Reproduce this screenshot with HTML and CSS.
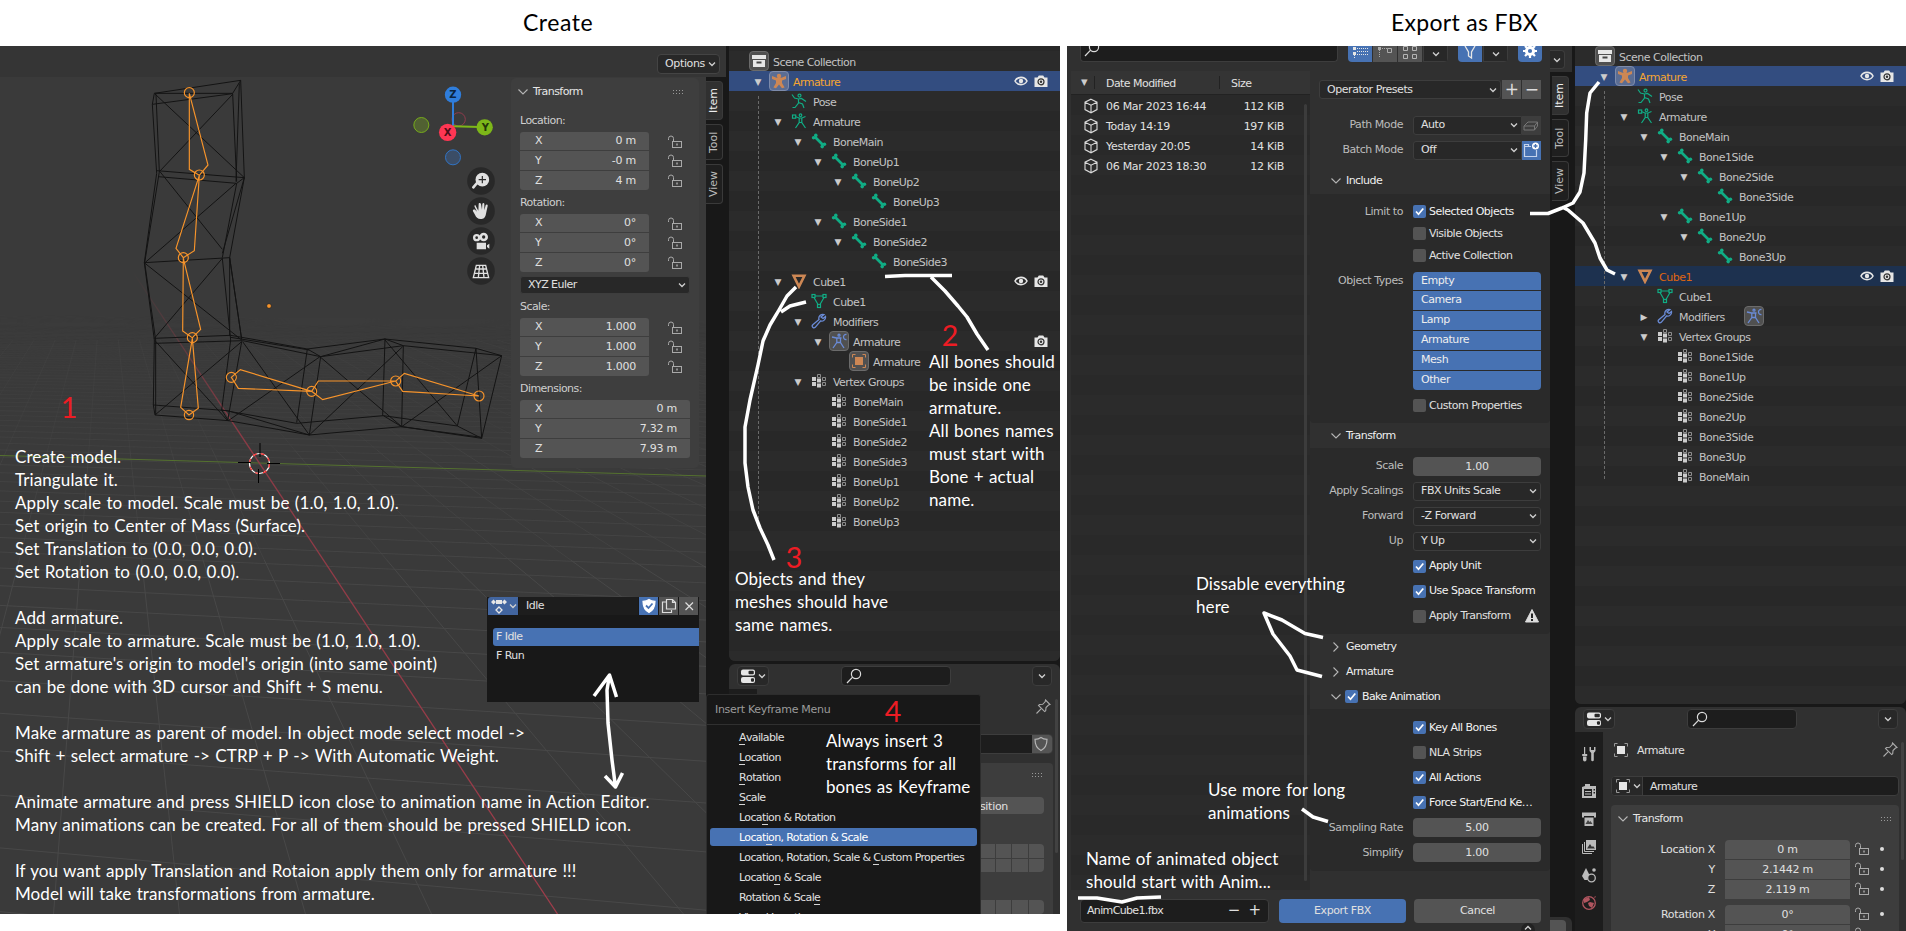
FILE: index.html
```html
<!DOCTYPE html>
<html lang="en">
<head>
<meta charset="utf-8">
<title>Create / Export as FBX</title>
<link rel="stylesheet" href="styles.css">
</head>
<body>
<svg class="defs" aria-hidden="true">
  <symbol id="coll" viewBox="0 0 16 16"><path fill="#e6e6e6" d="M1 2h14v4H1zM2 7h12v7H2z"/><path fill="#444" d="M5.5 8.5h5v2h-5z"/></symbol>
  <symbol id="armobj" viewBox="0 0 16 16"><circle cx="8" cy="3" r="2.200" fill="currentColor"/><path fill="currentColor" d="M1 3l4.500 1.800h5L15 3v3l-4 1.400V10l2.600 4.400-2.600.9L8 11.500l-3 3.800-2.600-.9L5 10V7.400L1 6z"/></symbol>
  <symbol id="pose" viewBox="0 0 16 16"><g fill="none" stroke="currentColor" stroke-width="1.200"><circle cx="8.500" cy="2.600" r="1.500"/><path d="M1 1.500l2.500 3.500 4 1 3-.5L15 8.500M7.500 6v4L4 14.500H1.500M7.500 9.500l4 1.500 1.500 4"/></g></symbol>
  <symbol id="armdata" viewBox="0 0 16 16"><g fill="none" stroke="currentColor" stroke-width="1.200"><rect x="1.500" y="2" width="3.200" height="3.200"/><circle cx="9.500" cy="2.200" r="1.300"/><path d="M5 3.800l3 1.200h3l3.500-1.500M8.200 5v4.500l-3.700 5.500M10.800 5v4.500l3.700 5.500M8.200 9.500h2.600"/></g></symbol>
  <symbol id="bone" viewBox="0 0 16 16"><path d="M4 4l8 8" stroke="currentColor" stroke-width="2.600"/><g fill="currentColor"><circle cx="2.600" cy="4.800" r="1.800"/><circle cx="4.800" cy="2.400" r="1.800"/><circle cx="13.400" cy="11.200" r="1.800"/><circle cx="11.200" cy="13.600" r="1.800"/></g></symbol>
  <symbol id="meshobj" viewBox="0 0 16 16"><path d="M2.600 2.800h10.800L8 13.600z" fill="none" stroke="currentColor" stroke-width="2.600"/></symbol>
  <symbol id="meshdata" viewBox="0 0 16 16"><g fill="none" stroke="currentColor" stroke-width="1.200"><rect x="1" y="1.500" width="3" height="3"/><rect x="12" y="1.500" width="3" height="3"/><rect x="6.500" y="11.500" width="3" height="3"/><path d="M4 3h8M3 4.500l4 7M13 4.500l-4 7"/></g></symbol>
  <symbol id="wrench" viewBox="0 0 16 16"><path fill="none" stroke="currentColor" stroke-width="1.300" d="M13 1.500a4 4 0 0 0-5 5L1.800 11.800a1.700 1.700 0 0 0 2.400 2.500L9.500 8a4 4 0 0 0 5-4.500l-2.500 2-2-1.500z"/></symbol>
  <symbol id="modarm" viewBox="0 0 16 16"><g fill="none" stroke="currentColor" stroke-width="1.300"><path d="M1 4l4.500 1h5M5.800 5v4.500L2 15M9.500 5v4.500L13 15M6 9.500h3.500M15.500 1.500c-4-.5-4 5.500 0 5"/><circle cx="8" cy="2.200" r="1"/></g></symbol>
  <symbol id="objsq" viewBox="0 0 16 16"><path fill="var(--sq,currentColor)" d="M4 4h8v8H4z"/><path fill="none" stroke="currentColor" stroke-width="1" d="M1.500 4.500v-3h3M11.500 1.500h3v3M14.500 11.500v3h-3M4.500 14.500h-3v-3"/></symbol>
  <symbol id="vg" viewBox="0 0 16 16"><g fill="#ccc"><path d="M1 4h4v4H1zM1 9h4v4H1zM6 5.500h4v4H6zM6 10.500h4v4H6z"/></g><g fill="none" stroke="#8c8c8c"><path d="M6.500 1.500h3v3h-3zM11.500 4.500h3v3h-3zM11.500 9.500h3v3h-3z"/></g></symbol>
  <symbol id="eye" viewBox="0 0 16 16"><path fill="none" stroke="#e6e6e6" stroke-width="1.600" d="M2 8c2.500-4.800 9.500-4.800 12 0-2.500 4.800-9.500 4.800-12 0z"/><circle cx="8" cy="8" r="2.200" fill="#e6e6e6"/></symbol>
  <symbol id="cam" viewBox="0 0 16 16"><path fill="#e6e6e6" d="M1.500 4.500h3l1.300-2h4.400l1.300 2h3v9.500h-13z"/><circle cx="8" cy="8.800" r="3" fill="none" stroke="#333" stroke-width="1.200"/><circle cx="8" cy="8.800" r="1.200" fill="#333"/></symbol>
  <symbol id="lock" viewBox="0 0 16 16"><g fill="none" stroke="#a9a9a9"><path d="M1.500 6V4.500a2.500 2.500 0 0 1 5 0V7"/><rect x="5.500" y="7.500" width="9" height="6"/><path d="M10 9.500v2" stroke="#ddd"/></g></symbol>
  <symbol id="chev" viewBox="0 0 10 10"><path d="M2 3.500l3 3 3-3" fill="none" stroke="#d0d0d0" stroke-width="1.300"/></symbol>
  <symbol id="big" viewBox="0 0 12 12"><path d="M1.500 3.500l4.500 4.500 4.500-4.500" fill="none" stroke="#b5b5b5" stroke-width="1.100"/></symbol>
  <symbol id="find" viewBox="0 0 16 16"><g fill="none" stroke="#dcdcdc" stroke-width="1.200"><circle cx="10" cy="6" r="4.600"/><path d="M6.600 9.200L1 15"/></g></symbol>
  <symbol id="pin" viewBox="0 0 16 16"><path fill="none" stroke="#aaa" stroke-width="1.100" d="M10.500 1l4.500 4.500-1.500.5-2.500 2.500-.3 3.300-1 .8L3.500 6.500l1-1 3.200-.2 2.400-2.500zM6 9.800L1.500 14.500"/></symbol>
  <symbol id="shield" viewBox="0 0 16 16"><path fill="var(--f,none)" stroke="var(--s,#b5b5b5)" stroke-width="1.200" d="M8 1.500c2 1.500 4 1.800 6 1.800 0 5-1.500 9-6 11.200C3.500 12.300 2 8.300 2 3.300c2 0 4-.3 6-1.800z"/></symbol>
  <symbol id="cube" viewBox="0 0 16 16"><path fill="none" stroke="#d9d9d9" stroke-width="1.100" d="M8 1.200l6 3v7.400l-6 3.200-6-3.200V4.200zM2 4.200l6 3 6-3M8 7.200v7.600"/></symbol>
  <symbol id="props" viewBox="0 0 16 16"><g fill="#e6e6e6"><rect x="1" y="1.500" width="14" height="6" rx="2"/><rect x="1" y="9" width="14" height="6" rx="2"/></g><rect x="8.500" y="2.700" width="5.300" height="3.600" rx="1" fill="#282828"/><rect x="11" y="10.200" width="3" height="3.600" rx="1" fill="#282828"/></symbol>
  <symbol id="dots" viewBox="0 0 12 6"><g fill="#999"><path d="M0 1h1v1H0zM3 1h1v1H3zM6 1h1v1H6zM9 1h1v1H9zM0 4h1v1H0zM3 4h1v1H3zM6 4h1v1H6zM9 4h1v1H9z"/></g></symbol>
</svg>

<main class="page">
<section class="fig fig-left">
  <h1 class="title">Create</h1>
  <div class="shot shot-left">
    <div class="view">
      <svg class="scene" viewBox="0 0 706 868">
        <g transform="translate(0 -46)">
          <g id="grid" class="grid"></g>
          <path d="M0 455.500L706 476" stroke="#55722f"/>
          <defs><linearGradient id="redfade" x1="0" y1="0" x2="0" y2="1"><stop offset="0" stop-color="#8b3a45" stop-opacity="0"/><stop offset=".25" stop-color="#8b3a45"/><stop offset="1" stop-color="#a03c4a"/></linearGradient></defs>
          <path d="M133 272L557.500 914" stroke="url(#redfade)" stroke-width="1.300"/>
          <g transform="scale(.33333)">
            <g class="wire">
              <path d="M463 280L722 241L733 533L689 773L725 1018M463 280L457 313L470 520L433 788L463 1020L460 1215L465 1245L685 1262M468 283L478 515L434 788L467 1020V1245M463 280H698L722 241M457 313L698 281L710 545M718 250L708 545M470 512L733 533L710 550L475 530M465 282L733 533M698 283L478 515M433 788L689 773V1008M710 550L667 773M733 533L667 760M480 515L667 748M708 550L435 788M667 775L692 1020L665 1230M689 773L725 1018M435 790L725 1020M667 775L463 1015M463 1015L692 1006M463 1030L728 1022M460 1215L683 1232M465 1022L683 1262M725 1025L465 1245M725 1025L683 1262"/>
              <path d="M692 1006L922 1047L1155 1017L1428 1045L1505 1067M728 1022L962 1070L1210 1037L1505 1067M692 1012L928 1050M1155 1017L1210 1037M922 1047L962 1070L1155 1017M922 1047L890 1268M962 1070L928 1305M728 1025L928 1305M960 1070L685 1262M665 1230L890 1270L1150 1247L1372 1278L1445 1315M665 1230L685 1262L928 1305L1205 1280L1445 1315M683 1232L928 1305M1150 1247L1205 1280L1445 1312M1155 1017L1148 1247M1210 1037L1205 1280M962 1072L1205 1280M1208 1040L928 1305M1155 1020L1372 1278M1505 1067L1205 1280M1428 1045L1372 1278M1428 1045L1445 1315L1505 1067"/>
            </g>
            <g class="bones">
              <path d="M568 280V508L598 526L624 495zM598 526L528 745L550 773L583 752zM550 775L548 993L577 1013L602 988zM577 1015L542 1222L567 1245L595 1225zM935 1174L721 1109L694 1132L715 1165zM1187 1143H955L935 1174L968 1199zM1437 1188L1213 1120L1187 1143L1208 1174z"/>
              <circle cx="568" cy="278" r="15"/><circle cx="598" cy="525" r="15"/><circle cx="550" cy="773" r="15"/><circle cx="577" cy="1013" r="15"/><circle cx="567" cy="1245" r="14"/><circle cx="694" cy="1132" r="15"/><circle cx="935" cy="1174" r="15"/><circle cx="1187" cy="1143" r="15"/><circle cx="1437" cy="1188" r="15"/>
            </g>
            <circle cx="807" cy="918" r="7" fill="#f7942b" stroke="#222" stroke-width="2"/>
            <g class="gizmo">
              <circle cx="1376" cy="358" r="20" fill="none" stroke="#8e3b4c" stroke-width="3"/>
              <circle cx="1264" cy="375" r="22.500" fill="#516132" stroke="#76ab1c" stroke-width="3"/>
              <circle cx="1359" cy="472" r="22.500" fill="#3b4d66" stroke="#3173c4" stroke-width="3"/>
              <path d="M1359 378V300" stroke="#2f7ddb" stroke-width="6"/><path d="M1359 379L1440 381" stroke="#7db719" stroke-width="6"/>
              <circle cx="1359" cy="284" r="24.500" fill="#2f7ddb"/><circle cx="1343" cy="397" r="26" fill="#ff3653"/><circle cx="1454" cy="382" r="24.500" fill="#7db719"/>
              <text x="1359" y="295" fill="#0b2440">Z</text><text x="1343" y="408" fill="#4c0e18">X</text><text x="1456" y="392" fill="#253708">Y</text>
            </g>
            <g fill="#282828"><circle cx="1443" cy="543" r="41.500"/><circle cx="1443" cy="633" r="41.500"/><circle cx="1443" cy="723" r="41.500"/><circle cx="1443" cy="813" r="41.500"/></g>
            <g fill="#e0e0e0">
              <circle cx="1447" cy="539" r="20.500"/><path d="M1431 549L1420 562" stroke="#e0e0e0" stroke-width="8" stroke-linecap="round"/><path d="M1436 539h22M1447 528v22" stroke="#282828" stroke-width="3.500"/>
              <path d="M1427 617l8 15 1-20c0-4 6-4 7 0l3 17 1-17c1-4 6-4 6 0l0 19 4-15c2-4 7-2 6 2l-5 23c-2 12-8 16-16 16-9 0-14-6-17-13l-6-10c-2-5 4-7 7-4l5 5-7-14c-2-5 2-8 3-4z"/>
              <circle cx="1430" cy="713" r="11"/><circle cx="1451" cy="711" r="13"/><path d="M1430 728h28v20h-28zM1461 736l7-5v15l-7-5zM1423 727l6 8"/><g fill="#282828"><circle cx="1430" cy="713" r="4"/><circle cx="1451" cy="711" r="5"/></g>
            </g>
            <path d="M1429 796h28l9 37h-46zM1425 807h36M1422 820h42M1439 796l-4 37M1448 796l4 37" fill="none" stroke="#e0e0e0" stroke-width="4"/>
          </g>
          <g fill="none"><circle cx="259.500" cy="463.500" r="10" stroke="#fff" stroke-width="1.200"/><circle cx="259.500" cy="463.500" r="10" stroke="#ff2b2b" stroke-width="1.200" stroke-dasharray="4 4"/><path d="M260 443v14M258.500 469v14M238 462.500h13M267 463.500h13" stroke="#000"/></g>
        </g>
      </svg>
      <div class="vhead"><span class="btn-opt">Options<svg class="ch"><use href="#chev"/></svg></span></div>
      <div class="vbody">
        <div class="npanel">
          <div class="phead"><svg class="big"><use href="#big"/></svg>Transform<svg class="dots"><use href="#dots"/></svg></div>
          <p class="lab">Location:</p>
          <div class="vec"><div class="cells"><div>X<b>0 m</b></div><div>Y<b>-0 m</b></div><div>Z<b>4 m</b></div></div><div class="locks"><svg><use href="#lock"/></svg><svg><use href="#lock"/></svg><svg><use href="#lock"/></svg></div></div>
          <p class="lab">Rotation:</p>
          <div class="vec"><div class="cells"><div>X<b>0°</b></div><div>Y<b>0°</b></div><div>Z<b>0°</b></div></div><div class="locks"><svg><use href="#lock"/></svg><svg><use href="#lock"/></svg><svg><use href="#lock"/></svg></div></div>
          <div class="drop euler">XYZ Euler<svg class="ch"><use href="#chev"/></svg></div>
          <p class="lab">Scale:</p>
          <div class="vec"><div class="cells"><div>X<b>1.000</b></div><div>Y<b>1.000</b></div><div>Z<b>1.000</b></div></div><div class="locks"><svg><use href="#lock"/></svg><svg><use href="#lock"/></svg><svg><use href="#lock"/></svg></div></div>
          <p class="lab">Dimensions:</p>
          <div class="vec"><div class="cells wide"><div>X<b>0 m</b></div><div>Y<b>7.32 m</b></div><div>Z<b>7.93 m</b></div></div></div>
        </div>
        <div class="tabs"><span class="tab on">Item</span><span class="tab">Tool</span><span class="tab">View</span></div>
      </div>
    </div>
    <div class="side">
      <div class="outliner" id="tree-left"></div>
      <div class="editor ed-left">
        <div class="ehead"><span class="ebox etype"><svg class="ic"><use href="#props"/></svg><svg class="ch"><use href="#chev"/></svg></span><span class="search"><svg class="ic"><use href="#find"/></svg></span><span class="ebox eopt"><svg class="ch"><use href="#chev"/></svg></span></div>
        <div class="ebody">
          <div class="nav-col"></div>
          <div class="content">
            <div class="pinrow"><svg class="ic"><use href="#pin"/></svg></div>
            <div class="namef"><span></span><i><svg class="ic"><use href="#shield"/></svg></i></div>
            <div class="panel">
              <svg class="dots"><use href="#dots"/></svg>
              <div class="restpos">Rest Position</div>
              <div class="layers"><i></i><i></i><i></i><i></i><i></i><i></i><i></i><i></i></div>
              <div class="layers"><i></i><i></i><i></i><i></i></div>
            </div>
          </div>
          <div class="sbar"></div>
        </div>
      </div>
    </div>

    <div class="popup">
      <div class="pbar"><span class="p-type"><svg width="16" height="16" viewBox="0 0 16 16"><path fill="#e6e6e6" d="M5 2h6v4H5zM2.500 1.500L5 4 2.500 6.500 0 4zM13.500 1.500L16 4l-2.500 2.500L11 4z"/><path fill="none" stroke="#e6e6e6" stroke-width="1.300" d="M8 9l3 3-3 3-3-3z"/></svg><svg class="ch"><use href="#chev"/></svg></span><span class="p-name">Idle</span><span class="p-b blue"><svg width="16" height="16"><use class="full" href="#shield"/><path d="M5 7.500l2.500 2.500L11.500 5.500" fill="none" stroke="#4772b3" stroke-width="1.800"/></svg></span><span class="p-b"><svg width="16" height="16"><path fill="none" stroke="#ddd" stroke-width="1.200" d="M5.500 1.500h6l3 3v6.500h-9zM11.500 1.500v3h3M5 4H1.500v10.500h9V12"/></svg></span><span class="p-b"><svg width="16" height="16"><path stroke="#ddd" stroke-width="1.200" d="M4.500 4.500l7.500 7.500M12 4.500l-7.500 7.500"/></svg></span></div>
      <div class="p-item sel">F Idle</div><div class="p-item">F Run</div>
    </div>

    <div class="menu">
      <div class="m-head">Insert Keyframe Menu</div>
      <div class="m-it"><u>A</u>vailable</div><div class="m-it"><u>L</u>ocation</div><div class="m-it"><u>R</u>otation</div><div class="m-it"><u>S</u>cale</div>
      <div class="m-it">Loca<u>t</u>ion &amp; Rotation</div><div class="m-it sel">Locat<u>i</u>on, Rotation &amp; Scale</div><div class="m-it">Location, Rotation, Scale &amp; <u>C</u>ustom Properties</div><div class="m-it">Locatio<u>n</u> &amp; Scale</div><div class="m-it">Rotation &amp; Scal<u>e</u></div><div class="m-it">Visual Location</div>
    </div>
  </div>
</section>

<section class="fig fig-right">
  <h1 class="title">Export as FBX</h1>
  <div class="shot shot-right">
    <div class="fbrowser">
      <div class="topbar"><span class="fsearch"><svg class="ic"><use href="#find"/></svg></span>
        <span class="grp g1"><i class="blue"><svg width="16" height="16"><path fill="#e6e6e6" d="M1 1h3v3H1zM1 6h3v3H1z"/><path stroke="#e6e6e6" stroke-dasharray="1 1" d="M5 2.500h11M5 5.500h11M5 8.500h11M2.500 9v4"/></svg></i><i><svg width="16" height="16"><path fill="#aaa" d="M1 1h3v3H1z"/><path fill="none" stroke="#aaa" stroke-dasharray="1 1" d="M5 2.500h5M2.500 4v8"/><path fill="none" stroke="#aaa" d="M10.500 2.500h4v4h-4z"/></svg></i><i><svg width="16" height="16"><path fill="none" stroke="#b5b5b5" d="M1.500.500h4v4h-4zM10.500.500h4v4h-4zM1.500 8.500h4v4h-4zM10.500 8.500h4v4h-4z"/></svg></i><i class="dk"><svg class="ch"><use href="#chev"/></svg></i></span>
        <span class="grp g2"><i class="blue"><svg width="16" height="16"><path fill="none" stroke="#e6e6e6" stroke-width="1.300" d="M3 0l3.500 6v4l3 2V6L13 0"/></svg></i><i class="dk"><svg class="ch"><use href="#chev"/></svg></i></span>
        <span class="grp g3"><i class="blue"><svg width="16" height="16"><circle cx="8" cy="5" r="3.600" fill="none" stroke="#fff" stroke-width="3"/><path d="M8-2v3M8 9v3M1 5h3M12 5h3M3 0l2 2M11 8l2 2M13 0l-2 2M5 8l-2 2" stroke="#fff" stroke-width="2.200"/></svg></i></span>
      </div>
      <div class="fmain">
        <div class="flist">
          <div class="fhead"><span class="tri">▼</span><span class="c1">Date Modified</span><span class="c2">Size</span></div>
          <div class="frows">
            <div class="frow"><svg class="ic"><use href="#cube"/></svg><span>06 Mar 2023 16:44</span><b>112 KiB</b></div>
            <div class="frow"><svg class="ic"><use href="#cube"/></svg><span>Today 14:19</span><b>197 KiB</b></div>
            <div class="frow"><svg class="ic"><use href="#cube"/></svg><span>Yesterday 20:05</span><b>14 KiB</b></div>
            <div class="frow"><svg class="ic"><use href="#cube"/></svg><span>06 Mar 2023 18:30</span><b>12 KiB</b></div>
          </div>
          <div class="fscroll"></div>
        </div>
        <div class="ops">
          <div class="presets"><span class="drop">Operator Presets<svg class="ch"><use href="#chev"/></svg></span><i>+</i><i>−</i></div>
          <div class="orow"><label>Path Mode</label><span class="drop joined">Auto<svg class="ch"><use href="#chev"/></svg></span><i class="dim"><svg width="16" height="16"><path fill="none" stroke="#777" d="M1 9l4-4h9.500l-3 4zM1 9v4h10.500V9M11.500 13l3-4V5"/></svg></i></div>
          <div class="orow"><label>Batch Mode</label><span class="drop joined">Off<svg class="ch"><use href="#chev"/></svg></span><i class="blue"><svg width="16" height="16"><path fill="none" stroke="#c5d3ec" stroke-width="1.200" d="M8 4.500H1.500v10h12V8M1.500 4V2.500h4V4"/><circle cx="12.500" cy="4" r="3.500" fill="#fff"/><path stroke="#4772b3" stroke-width="1.300" d="M10.500 4h4M12.500 2v4"/></svg></i></div>
          <div class="ohead h-inc"><svg class="big"><use href="#big"/></svg>Include</div>
          <div class="obody b-inc">
            <div class="crow"><label>Limit to</label><span class="ck on">Selected Objects</span></div>
            <div class="crow"><label></label><span class="ck">Visible Objects</span></div>
            <div class="crow"><label></label><span class="ck">Active Collection</span></div>
            <div class="types"><label>Object Types</label><div><p>Empty</p><p>Camera</p><p>Lamp</p><p>Armature</p><p>Mesh</p><p>Other</p></div></div>
            <div class="crow last"><label></label><span class="ck">Custom Properties</span></div>
          </div>
          <div class="ohead"><svg class="big"><use href="#big"/></svg>Transform</div>
          <div class="obody b-tr">
            <div class="orow"><label>Scale</label><span class="num">1.00</span></div>
            <div class="orow"><label>Apply Scalings</label><span class="drop">FBX Units Scale<svg class="ch"><use href="#chev"/></svg></span></div>
            <div class="orow"><label>Forward</label><span class="drop">-Z Forward<svg class="ch"><use href="#chev"/></svg></span></div>
            <div class="orow"><label>Up</label><span class="drop">Y Up<svg class="ch"><use href="#chev"/></svg></span></div>
            <div class="orow"><label></label><span class="ck on">Apply Unit</span></div>
            <div class="orow"><label></label><span class="ck on">Use Space Transform</span></div>
            <div class="orow"><label></label><span class="ck">Apply Transform</span><svg class="warn" width="16" height="16"><path fill="#dcdcdc" stroke="#dcdcdc" stroke-linejoin="round" d="M8 1.500l6.500 12.500h-13z"/><path stroke="#222" stroke-width="2" d="M8 5.500v4.500M8 11v2"/></svg></div>
          </div>
          <div class="ohead"><svg class="big shut"><use href="#big"/></svg>Geometry</div>
          <div class="ohead"><svg class="big shut"><use href="#big"/></svg>Armature</div>
          <div class="ohead"><svg class="big"><use href="#big"/></svg><span class="ck on bake">Bake Animation</span></div>
          <div class="obody b-bake">
            <div class="orow"><label></label><span class="ck on">Key All Bones</span></div>
            <div class="orow"><label></label><span class="ck">NLA Strips</span></div>
            <div class="orow"><label></label><span class="ck on">All Actions</span></div>
            <div class="orow"><label></label><span class="ck on">Force Start/End Ke…</span></div>
            <div class="orow"><label>Sampling Rate</label><span class="num">5.00</span></div>
            <div class="orow"><label>Simplify</label><span class="num">1.00</span></div>
          </div>
        </div>
      </div>
      <div class="fbot"><span class="fname">AnimCube1.fbx<i>−</i><i>+</i></span><span class="fbtn blue">Export FBX</span><span class="fbtn">Cancel</span></div>
      <div class="fhandle"><svg class="ch"><use href="#chev"/></svg></div>
    </div>
    <div class="strip"><div class="strip-head"><span><svg class="ch"><use href="#chev"/></svg></span></div><div class="tabs"><span class="tab on">Item</span><span class="tab">Tool</span><span class="tab">View</span></div><div class="strip-foot"><i></i></div></div>
    <div class="side">
      <div class="outliner" id="tree-right"></div>
      <div class="editor ed-right">
        <div class="ehead"><span class="ebox etype"><svg class="ic"><use href="#props"/></svg><svg class="ch"><use href="#chev"/></svg></span><span class="search"><svg class="ic"><use href="#find"/></svg></span><span class="ebox eopt"><svg class="ch"><use href="#chev"/></svg></span></div>
        <div class="ebody">
          <div class="nav-col">
            <svg viewBox="0 0 16 16"><path fill="#bbb" d="M3 1h1.200v7H3zM1.200 8h5v2h-5zM2 10.500h3.500v3.200a1.700 1.700 0 0 1-3.500 0zM9 1l1 0v3h3V1h1.500v4l-1.700 2v7a1.300 1.300 0 0 1-2.600 0V7L8.500 5V1z"/></svg>
            <svg viewBox="0 0 16 16"><path fill="#bbb" d="M4 3V1h5v2h6v12H1V4l3-1z"/><path fill="#222" d="M3 6h8v7H3zM12.500 6h1.500v1.500h-1.500zM12.500 9H14v1.500h-1.500z"/><path stroke="#bbb" d="M4 8.500h6M4 11h6"/></svg>
            <svg viewBox="0 0 16 16"><path fill="#bbb" d="M1 1.500h14v5h-2V5H3v1.500H1zM3.500 6.500h9v8.500h-9z"/><path fill="#444" d="M4.500 13l2.500-4 1.500 2 1-1 2 3z"/></svg>
            <svg viewBox="0 0 16 16"><path fill="#bbb" d="M5 1h10v10H5z"/><path fill="#333" d="M6 9.500L9 5l2 3 1-1 2 2.500z"/><path fill="none" stroke="#bbb" d="M3.500 3v9.500H13M1.500 5v9.500H11"/></svg>
            <svg viewBox="0 0 16 16"><path fill="#bbb" d="M5 1l4 8-2.500 4H3.500L1 9z"/><circle cx="10.500" cy="11" r="3.800" fill="#222" stroke="#bbb" stroke-width="1.300"/><circle cx="13" cy="3" r="1.800" fill="#bbb"/></svg>
            <svg viewBox="0 0 16 16"><circle cx="8" cy="8" r="6.300" fill="none" stroke="#b0555f" stroke-width="1.300"/><path fill="#b0555f" d="M3 4l5-2 1 3-3 2-3 1zM9 7l4 1-2 5-3-2-1-3zM13 2l2-1-1 2z"/></svg>
          </div>
          <div class="content">
            <div class="crumb"><svg class="ic"><use href="#objsq"/></svg><span>Armature</span><svg class="ic pin"><use href="#pin"/></svg></div>
            <div class="namef"><em><svg class="ic"><use href="#objsq"/></svg><svg class="ch"><use href="#chev"/></svg></em><span>Armature</span></div>
            <div class="panel">
              <div class="phead"><svg class="big"><use href="#big"/></svg>Transform<svg class="dots"><use href="#dots"/></svg></div>
              <div class="trow first"><label>Location X</label><span>0 m</span><svg><use href="#lock"/></svg><i></i></div>
              <div class="trow"><label>Y</label><span>2.1442 m</span><svg><use href="#lock"/></svg><i></i></div>
              <div class="trow"><label>Z</label><span>2.119 m</span><svg><use href="#lock"/></svg><i></i></div>
              <div class="trow rot"><label>Rotation X</label><span>0°</span><svg><use href="#lock"/></svg><i></i></div>
              <div class="trow"><label>Y</label><span>0°</span><svg><use href="#lock"/></svg><i></i></div>
            </div>
          </div>
          <div class="sbar"></div>
        </div>
      </div>
    </div>
  </div>
</section>

<div class="note n-main">Create model.
Triangulate it.
Apply scale to model. Scale must be (1.0, 1.0, 1.0).
Set origin to Center of Mass (Surface).
Set Translation to (0.0, 0.0, 0.0).
Set Rotation to (0.0, 0.0, 0.0).

Add armature.
Apply scale to armature. Scale must be (1.0, 1.0, 1.0).
Set armature's origin to model's origin (into same point)
can be done with 3D cursor and Shift + S menu.

Make armature as parent of model. In object mode select model -&gt;
Shift + select armature -&gt; CTRP + P -&gt; With Automatic Weight.

Animate armature and press SHIELD icon close to animation name in Action Editor.
Many animations can be created. For all of them should be pressed SHIELD icon.

If you want apply Translation and Rotaion apply them only for armature !!!
Model will take transformations from armature.</div>
<div class="note n-bones">All bones should
be inside one
armature.
All bones names
must start with
Bone + actual
name.</div>
<div class="note n-names">Objects and they
meshes should have
same names.</div>
<div class="note n-key">Always insert 3
transforms for all
bones as Keyframe</div>
<div class="note n-dis">Dissable everything
here</div>
<div class="note n-rate">Use more for long
animations</div>
<div class="note n-file">Name of animated object
should start with Anim...</div>
<div class="step s1">1</div><div class="step s2">2</div><div class="step s3">3</div><div class="step s4">4</div>
<svg class="ink" viewBox="0 0 1906 931">
  <path d="M885 276.500L905 275.500H952M931 277L945 291L958 306L967 317L977 334L988 350"/>
  <path d="M796 287L787 296L779 310L770 325L763 341L758 365L750 400L745 427V463L748 487L753 510L760 528L768 545L774 560M806 302L790 306L781 312"/>
  <path d="M609.500 675L607 690L608 723L612 760L615.500 787M594 696L609.500 675L616.500 697M605 776L615.500 787L622.500 773"/>
  <path d="M1530 213.500H1548L1562 208L1573 203L1580 192L1584 173L1585.700 140L1586.700 113L1590 93L1599 82M1562 207L1568 210L1583 223L1595 243L1600 258L1607 270L1615 274"/>
  <path d="M1323 637.500L1305 633.500L1282 620L1264 613L1273 634L1290 656L1297 670L1322 676.500M1302 809L1313 817L1328 821.500"/>
  <path d="M1078 898H1097L1122 902L1137 898L1161 897"/>
</svg>
</main>
<script src="main.js"></script>
</body>
</html>
```
FILE: styles.css
```css
* { box-sizing: border-box; }
body { margin: 0; background: #fff; font: 11px/14px "DejaVu Sans", sans-serif; letter-spacing: -.55px; color: #e0e0e0; }
.defs { position: absolute; width: 0; height: 0; }
.page { position: relative; display: flex; gap: 7px; width: 1906px; height: 931px; overflow: hidden; }
p { margin: 0; }
b, i, em { font-weight: normal; font-style: normal; }
svg { flex: none; }
.fig { display: flex; flex-direction: column; }
.fig-left { width: 1060px; }
.fig-right { width: 839px; }
.title { margin: 0; height: 46px; padding-left: 523px; font: 400 23px/44px Lato, sans-serif; letter-spacing: .55px; color: #000; }
.fig-right .title { padding-left: 324px; letter-spacing: .3px; }
.shot { position: relative; display: flex; overflow: hidden; background: #181818; }
.shot-left { height: 868px; gap: 3px; }
.shot-right { height: 885px; }
.ic { width: 16px; height: 16px; }
.ch { width: 10px; height: 10px; }
.big { width: 12px; height: 12px; }
.big.shut { transform: rotate(-90deg); }
.dots { width: 12px; height: 6px; margin-left: auto; }
.blue { background: #4772b3; }

/* 3D viewport */
.view { position: relative; display: flex; flex-direction: column; width: 726px; }
.scene { position: absolute; left: 0; top: 0; width: 706px; height: 868px; background: #3a3a3a; }
.grid { stroke: #484848; fill: none; }
.wire { stroke: #131313; stroke-width: 3; fill: none; }
.bones { stroke: #f7942b; stroke-width: 3.500; fill: none; }
.gizmo text { font: 700 30px "DejaVu Sans", sans-serif; letter-spacing: 0; text-anchor: middle; }
.vhead { position: relative; display: flex; justify-content: flex-end; height: 31px; padding: 8px 6px 0 0; background: #353535; }
.btn-opt { display: flex; justify-content: space-between; align-items: center; width: 63px; height: 20px; padding: 0 2px 0 7px; background: #282828; border: 1px solid #444; border-radius: 4px; letter-spacing: -.35px; }
.vbody { position: relative; display: flex; justify-content: flex-end; flex: 1; }
.npanel { width: 188px; height: 390px; margin: 1px 7px 0 0; padding: 0 9px; background: #3e3e3e; border-radius: 5px; color: #cfcfcf; }
.phead { display: flex; align-items: center; height: 26px; padding: 1px 5px 0 0; gap: 4px; color: #e6e6e6; margin-left: -3px; }
.npanel .lab { height: 14px; margin: 6px 0 4px; }
.npanel .phead + .lab { margin-top: 10px; }
.vec { display: flex; height: 58px; }
.cells { width: 129px; display: grid; grid-template-rows: 18px 19px 19px; gap: 1px; border-radius: 3px; overflow: hidden; }
.cells.wide { width: 170px; }
.cells div { display: flex; justify-content: space-between; align-items: center; padding: 0 13px 0 15px; background: #545454; color: #e0e0e0; }
.cells b { letter-spacing: -.25px; }
.locks { margin-left: 18px; display: grid; grid-template-rows: repeat(3, 19.500px); align-items: center; }
.locks svg { width: 16px; height: 16px; }
.drop { display: flex; align-items: center; justify-content: space-between; padding: 0 2px 0 7px; background: #282828; border: 1px solid #3d3d3d; border-radius: 3px; color: #e0e0e0; }
.drop.joined { border-radius: 3px 0 0 3px; }
.euler { height: 18px; margin-top: 4px; }
.tabs { width: 20px; background: #181818; padding-top: 4px; display: flex; flex-direction: column; gap: 4px; }
.tab { width: 17px; height: 39px; display: flex; align-items: center; justify-content: center; writing-mode: vertical-rl; transform: rotate(180deg); background: #1f1f1f; border: 1px solid #3a3a3a; border-right: 0; border-radius: 4px 0 0 4px; color: #bbb; letter-spacing: 0; }
.tab:nth-child(2) { height: 36px; }
.tab:nth-child(3) { height: 40px; }
.tab.on { background: #303030; color: #eee; }

/* outliner */
.side { width: 331px; display: flex; flex-direction: column; gap: 3px; }
.outliner { position: relative; overflow: hidden; background: #282828; border-radius: 0 0 6px 6px; color: #c3c3c3; }
#tree-left { height: 615px; padding-top: 5px; }
#tree-right { height: 658px; letter-spacing: -.5px; }
.row { display: flex; align-items: center; height: 20px; padding-right: 11px; }
.row:nth-child(odd) { background: #2b2b2b; }
.row .arrow { width: 12px; padding-top: 2px; text-align: center; font-size: 9px; color: #ccc; letter-spacing: 0; }
.row .box { width: 20px; height: 20px; display: flex; align-items: center; justify-content: center; margin: 0 4px 0 5px; border-radius: 4px; }
.row .box.on { background: #505050; border: 1px solid #6b6b6b; }
.row .name { padding-top: 3px; }
.row .toggles { margin-left: auto; display: flex; gap: 4px; }
.row.active { background: #334d80; }
.row.active .name { color: #f5a531; }
.row.active .box.on { background: #5b6d93; border-color: #7d8bab; }
.row.picked { background: #1d314f; }
.row.picked .name { color: #e0660f; }
.row .box.extra { margin-left: 19px; }
.orange { color: #cd8754; }
.green { color: #10ad85; }
.bluei { color: #6a8bd6; }
.trunk { position: absolute; left: 29px; top: 50px; height: 428px; border-left: 1px dashed #6a6a6a; }
#tree-right .trunk { top: 45px; height: 388px; }

/* properties editors */
.editor { flex: 1; display: flex; flex-direction: column; overflow: hidden; background: #303030; border-radius: 6px 6px 0 0; }
.ehead { display: flex; height: 25px; padding: 2px 8px 0; }
.ebox { display: flex; align-items: center; justify-content: center; height: 20px; background: #282828; border: 1px solid #3d3d3d; border-radius: 4px; }
.etype { width: 32px; gap: 1px; }
.eopt { width: 20px; margin-left: auto; }
.search { width: 110px; height: 20px; margin-left: 72px; padding: 1px 4px; background: #1d1d1d; border: 1px solid #3d3d3d; border-radius: 4px; }
.ebody { flex: 1; display: flex; min-height: 0; overflow: hidden; }
.nav-col { width: 28px; background: #1d1d1d; display: flex; flex-direction: column; align-items: center; gap: 12px; padding-top: 14px; }
.ed-left .nav-col { height: 5px; }
.nav-col svg { width: 16px; height: 16px; }
.nav-col svg:first-child { margin-bottom: 9px; }
.content { width: 288px; margin-left: 8px; display: flex; flex-direction: column; }
.sbar { width: 3px; height: 154px; margin: 10px 0 0 2px; border-radius: 2px; background: #424242; }
.ed-right .sbar { height: 118px; }
.pinrow { height: 45px; padding-top: 10px; display: flex; justify-content: flex-end; }
.pinrow svg { margin-right: 2px; }
.namef { display: flex; height: 20px; background: #1d1d1d; border: 1px solid #3d3d3d; border-radius: 4px; overflow: hidden; }
.namef i { width: 20px; background: #545454; padding: 1px; margin-left: auto; }
.namef em { width: 31px; display: flex; align-items: center; padding-left: 3px; gap: 1px; background: #282828; border-right: 1px solid #3d3d3d; }
.namef span { padding: 3px 7px 0; }
.panel { flex: 1; margin-top: 9px; background: #3d3d3d; border-radius: 4px 4px 0 0; overflow: hidden; }
.ed-left .panel { display: flex; flex-direction: column; padding: 9px 9px 0; }
.restpos { height: 19px; margin: 19px 0 30px; padding: 3px 36px 0 0; text-align: right; background: #545454; border-radius: 4px; letter-spacing: -.3px; }
.layers { display: grid; grid-template-columns: repeat(4, 15.500px); grid-auto-rows: 13.500px; gap: 1px; justify-content: end; border-radius: 4px; overflow: hidden; margin-bottom: 28px; flex: none; }
.layers i { background: #545454; }
.crumb { display: flex; align-items: center; height: 16px; margin: 10px 0 18px; padding-left: 2px; gap: 8px; --sq: #e6e6e6; }
.crumb span { padding-top: 2px; }
.crumb .pin { margin: 0 1px 0 auto; }
.crumb svg, .namef svg { color: #999; --sq: #e6e6e6; }
.ed-right .phead { margin: 0; padding: 2px 6px 0; }
.trow { display: flex; align-items: center; height: 20px; }
.trow.first { margin-top: 8px; }
.trow.rot { margin-top: 5px; }
.trow label { width: 104px; padding-top: 1px; text-align: right; letter-spacing: -.3px; }
.trow span { width: 125px; height: 19px; margin-left: 10px; text-align: center; line-height: 19px; background: #545454; letter-spacing: -.25px; }
.trow.first span, .trow.rot span { border-radius: 4px 4px 0 0; }
.trow svg { width: 16px; height: 16px; margin-left: 4px; }
.trow i { width: 4px; height: 4px; margin-left: 10px; border-radius: 50%; background: #ddd; }

/* action list popup */
.popup { position: absolute; left: 487px; top: 551px; width: 212px; height: 105px; background: #181818; }
.pbar { display: flex; gap: 1px; height: 18px; padding-left: 1px; margin-bottom: 13px; }
.p-type { width: 30px; background: #42659f; display: flex; align-items: center; gap: 1px; padding-left: 3px; border-radius: 3px 0 0 0; }
.p-name { width: 119px; background: #1d1d1d; padding: 2px 7px; }
.p-b { width: 19px; padding: 1px 1px 1px 2px; background: #545454; }
.p-b.blue { background: #4772b3; }
.full { --f: #fff; --s: #fff; }
.p-item { height: 18px; margin: 0 0 1px 6px; padding: 2px 3px; border-radius: 3px 0 0 3px; }
.p-item.sel { background: #4772b3; }

/* keyframe menu */
.menu { position: absolute; left: 706px; top: 648px; width: 275px; height: 230px; background: #181818; border: 1px solid #2d2d2d; border-radius: 3px 3px 0 0; letter-spacing: -.62px; }
.m-head { height: 30px; margin-bottom: 3px; padding: 8px 8px 0; color: #9b9b9b; border-bottom: 1px solid #303030; letter-spacing: -.3px; }
.m-it { height: 18px; margin: 0 3px 2px; padding: 3px 0 0 29px; border-radius: 3px; white-space: nowrap; }
.m-it.sel { background: #4772b3; color: #fff; }
.m-it u { position: relative; text-decoration: none; }
.m-it u::after { content: ""; position: absolute; left: 0; bottom: -1px; width: 6px; height: 1px; background: #d5d5d5; }

/* file browser */
.fbrowser { position: relative; width: 483px; background: #303030; display: flex; flex-direction: column; }
.topbar { display: flex; height: 16px; padding-left: 13px; }
.topbar .fsearch { width: 258px; padding-left: 3px; background: #1d1d1d; border: 1px solid #3d3d3d; border-top: 0; border-radius: 0 0 4px 4px; overflow: hidden; }
.fsearch svg { margin-top: -5px; }
.grp { display: flex; gap: 1px; margin-left: 10px; border-radius: 0 0 4px 4px; overflow: hidden; }
.grp i { width: 24px; background: #545454; display: flex; justify-content: center; }
.grp i.blue { background: #4772b3; }
.grp i.dk { width: 25px; background: #282828; border: 1px solid #3d3d3d; border-top: 0; align-items: center; }
.fmain { display: flex; height: 828px; }
.flist { position: relative; width: 239px; margin: 9px 0 0 4px; display: flex; flex-direction: column; }
.fhead { display: flex; align-items: center; height: 24px; background: #343434; border-bottom: 1px solid #222; }
.fhead span { height: 13px; line-height: 15px; }
.fhead .tri { width: 24px; padding-left: 10px; font-size: 8.500px; line-height: 13px; border-right: 1px solid #222; color: #ccc; }
.fhead .c1 { width: 125px; padding-left: 11px; border-right: 1px solid #222; }
.fhead .c2 { padding-left: 11px; }
.frows { flex: 1; padding-top: 1px; background: repeating-linear-gradient(#292929 0 20px, #2b2b2b 20px 40px); }
.frow { display: flex; align-items: center; height: 20px; padding: 0 26px 0 12px; gap: 7px; letter-spacing: -.28px; }
.frow span, .frow b { padding-top: 2px; }
.frow b { margin-left: auto; }
.fscroll { position: absolute; left: 233px; top: 33px; width: 3px; height: 777px; border-radius: 2px; background: #3c3c3c; }
.ops { width: 240px; color: #e0e0e0; }
.presets { display: flex; margin: 18px 9px 13.500px; gap: 1px; height: 19px; }
.presets .drop { flex: 1; letter-spacing: -.45px; }
.presets i { width: 19px; background: #545454; text-align: center; font-size: 17px; line-height: 18px; color: #ddd; }
.orow { display: flex; align-items: center; height: 25px; padding-right: 9px; }
.orow label, .crow label, .types label { width: 93px; margin-right: 10px; text-align: right; color: #bcbcbc; letter-spacing: -.45px; }
.orow .drop, .orow .num { flex: 1; height: 19px; letter-spacing: -.45px; }
.orow > i { width: 19px; height: 19px; padding: 1px; }
.dim { background: #3d3d3d; }
.orow .num { background: #545454; border-radius: 4px; text-align: center; line-height: 19px; letter-spacing: -.25px; }
.ohead { display: flex; align-items: center; gap: 4px; height: 25px; padding-left: 20px; color: #eee; }
.h-inc { margin-top: 6px; }
.obody { background: #2a2a2a; border-radius: 0 0 4px 4px; }
.b-inc { height: 229.500px; padding-top: 7px; }
.crow { display: flex; align-items: center; height: 22px; }
.ck { display: flex; align-items: center; gap: 3px; letter-spacing: -.5px; white-space: nowrap; }
.ck::before { content: ""; width: 13px; height: 13px; background: #545454; border-radius: 2px; }
.ck.on { color: #f2f2f2; }
.ck.on::before { background: #4772b3 url("data:image/svg+xml,%3Csvg xmlns='http://www.w3.org/2000/svg' width='13' height='13'%3E%3Cpath d='M3 6.500l2.500 2.800L10.300 3.500' fill='none' stroke='white' stroke-width='1.700'/%3E%3C/svg%3E"); }
.types { display: flex; margin-top: 5px; line-height: 18px; }
.types div { width: 128px; display: grid; grid-template-rows: 18px repeat(5, 19px); gap: 1px; border-radius: 4px; overflow: hidden; }
.types p { background: #4772b3; padding-left: 8px; color: #eee; letter-spacing: -.45px; }
.crow.last { margin-top: 5px; }
.b-tr { height: 186px; padding-top: 5.500px; }
.b-bake { height: 161.500px; padding-top: 6px; }
.warn { margin-left: auto; margin-right: 1px; }
.ck.bake { gap: 4px; margin-left: -1px; letter-spacing: -.6px; }
.fbot { display: flex; margin: 9px 9px 0 13px; height: 24px; line-height: 24px; text-align: center; }
.fname { width: 189px; margin-right: 10px; padding-left: 6px; display: flex; gap: 8px; background: #1d1d1d; border: 1px solid #3d3d3d; border-radius: 4px; line-height: 22px; letter-spacing: -.65px; }
.fname i { font-size: 15px; letter-spacing: 0; line-height: 20px; }
.fname i:first-of-type { margin-left: auto; }
.fname i:last-of-type { margin-right: 7px; }
.fbtn { width: 127px; background: #545454; border-radius: 4px; margin-left: 8px; letter-spacing: -.4px; }
.fbtn.blue { background: #4772b3; margin-left: 0; }
.fhandle { display: flex; justify-content: center; width: 14px; height: 8px; margin: 0 0 0 454px; background: #222; border-radius: 7px 7px 0 0; }
.fhandle svg { transform: rotate(180deg); }
.strip { width: 25px; display: flex; flex-direction: column; padding-right: 3px; }
.strip-head { height: 26px; background: #303030; padding: 4px 7px 0 0; }
.strip-head span { display: flex; height: 19px; align-items: center; justify-content: center; background: #282828; border: 1px solid #3d3d3d; border-left: 0; border-radius: 0 4px 4px 0; }
.strip .tabs { flex: 1; }
.strip .tab { margin-left: 2px; width: 17px; }
.strip .tab:nth-child(2) { height: 38px; }
.strip-foot { height: 14px; padding: 3px 6px 0 0; background: #303030; border-radius: 0 6px 0 0; }
.strip-foot i { display: block; height: 11px; background: #545454; border-radius: 0 4px 0 0; }

/* annotations */
.note { position: absolute; white-space: pre; font: 17px/23px Lato, sans-serif; letter-spacing: .1px; word-spacing: .85px; color: #fff; }
.n-main { left: 15px; top: 444.500px; }
.n-bones { left: 929px; top: 349.500px; }
.n-names { left: 735px; top: 566.500px; }
.n-key { left: 826px; top: 728.500px; }
.n-dis { left: 1196px; top: 571.500px; }
.n-rate { left: 1208px; top: 777.500px; }
.n-file { left: 1086px; top: 846.500px; }
.step { position: absolute; width: 20px; text-align: center; font: 28.500px/30px Lato, sans-serif; letter-spacing: 0; color: #ed1c24; }
.s1 { left: 59px; top: 392px; }
.s2 { left: 940px; top: 320px; }
.s3 { left: 784px; top: 542px; }
.s4 { left: 883px; top: 696px; }
.ink { position: absolute; left: 0; top: 0; width: 1906px; height: 931px; fill: none; stroke: #fff; stroke-width: 3.500; stroke-linejoin: round; pointer-events: none; }
```
FILE: main.js
```js
// Perspective floor grid of the 3D viewport.
const grid = document.getElementById('grid');
const line = (x1, y1, x2, y2, o) =>
  `<path d="M${x1.toFixed(1)} ${y1.toFixed(1)}L${x2.toFixed(1)} ${y2.toFixed(1)}" stroke-opacity="${o.toFixed(2)}"/>`;
let out = '';
for (let k = -1; k < 75; k++) {
  const y = 240 + 1 / (0.001645 + 0.000156 * k);
  const slope = 0.00015 * (y - 260);
  out += line(0, y, 706, y + slope * 706, Math.max(0.08, Math.min(1, (y - 300) / 300)));
}
for (let k = -24; k < 30; k++) {
  const x = 53.5 + 126 * k;
  const at = y => 106 + (x - 106) * (y - 225) / (914 - 225);
  if (k === 4) continue;
  out += line(at(340), 340, at(450), 450, 0.3) + line(at(450), 450, at(560), 560, 0.6) + line(at(560), 560, x, 914, 1);
}
grid.innerHTML = out;

// Outliner rows: [depth, arrow, icon, colour, name, options]
const vg = names => names.map(n => [3, '', 'vg', '', n]);
const trees = {
  'tree-left': [
    [-1, '', 'coll', '', 'Scene Collection', { box: 1 }],
    [0, '▼', 'armobj', 'orange', 'Armature', { box: 1, cls: 'active', eye: 1, cam: 1 }],
    [1, '', 'pose', 'green', 'Pose'],
    [1, '▼', 'armdata', 'green', 'Armature'],
    [2, '▼', 'bone', 'green', 'BoneMain'],
    [3, '▼', 'bone', 'green', 'BoneUp1'],
    [4, '▼', 'bone', 'green', 'BoneUp2'],
    [5, '', 'bone', 'green', 'BoneUp3'],
    [3, '▼', 'bone', 'green', 'BoneSide1'],
    [4, '▼', 'bone', 'green', 'BoneSide2'],
    [5, '', 'bone', 'green', 'BoneSide3'],
    [1, '▼', 'meshobj', 'orange', 'Cube1', { eye: 1, cam: 1 }],
    [2, '', 'meshdata', 'green', 'Cube1'],
    [2, '▼', 'wrench', 'bluei', 'Modifiers'],
    [3, '▼', 'modarm', 'bluei', 'Armature', { box: 1, cam: 1 }],
    [4, '', 'objsq', 'orange', 'Armature', { box: 1 }],
    [2, '▼', 'vg', '', 'Vertex Groups'],
    ...vg(['BoneMain', 'BoneSide1', 'BoneSide2', 'BoneSide3', 'BoneUp1', 'BoneUp2', 'BoneUp3'])
  ],
  'tree-right': [
    [-1, '', 'coll', '', 'Scene Collection', { box: 1 }],
    [0, '▼', 'armobj', 'orange', 'Armature', { box: 1, cls: 'active', eye: 1, cam: 1 }],
    [1, '', 'pose', 'green', 'Pose'],
    [1, '▼', 'armdata', 'green', 'Armature'],
    [2, '▼', 'bone', 'green', 'BoneMain'],
    [3, '▼', 'bone', 'green', 'Bone1Side'],
    [4, '▼', 'bone', 'green', 'Bone2Side'],
    [5, '', 'bone', 'green', 'Bone3Side'],
    [3, '▼', 'bone', 'green', 'Bone1Up'],
    [4, '▼', 'bone', 'green', 'Bone2Up'],
    [5, '', 'bone', 'green', 'Bone3Up'],
    [1, '▼', 'meshobj', 'orange', 'Cube1', { cls: 'picked', eye: 1, cam: 1 }],
    [2, '', 'meshdata', 'green', 'Cube1'],
    [2, '▶', 'wrench', 'bluei', 'Modifiers', { extra: 1 }],
    [2, '▼', 'vg', '', 'Vertex Groups'],
    ...vg(['Bone1Side', 'Bone1Up', 'Bone2Side', 'Bone2Up', 'Bone3Side', 'Bone3Up', 'BoneMain'])
  ]
};
const use = (id, cls = '') => `<svg class="ic ${cls}"><use href="#${id}"/></svg>`;
for (const [id, rows] of Object.entries(trees)) {
  const host = document.getElementById(id);
  while (rows.length < 33) rows.push(null);
  host.innerHTML = rows.map(r => {
    if (!r) return '<div class="row"></div>';
    const [d, arrow, icon, color, name, o = {}] = r;
    return `<div class="row ${o.cls || ''}" style="padding-left:${23 + 20 * d}px"><span class="arrow">${arrow}</span>` +
      `<span class="box ${o.box ? 'on' : ''}">${use(icon, color)}</span><span class="name">${name}</span>` +
      (o.extra ? `<span class="box on extra">${use('modarm', 'bluei')}</span>` : '') +
      `<span class="toggles">${o.eye ? use('eye') : ''}${o.cam ? use('cam') : ''}</span></div>`;
  }).join('') + '<div class="trunk"></div>';
}
```
